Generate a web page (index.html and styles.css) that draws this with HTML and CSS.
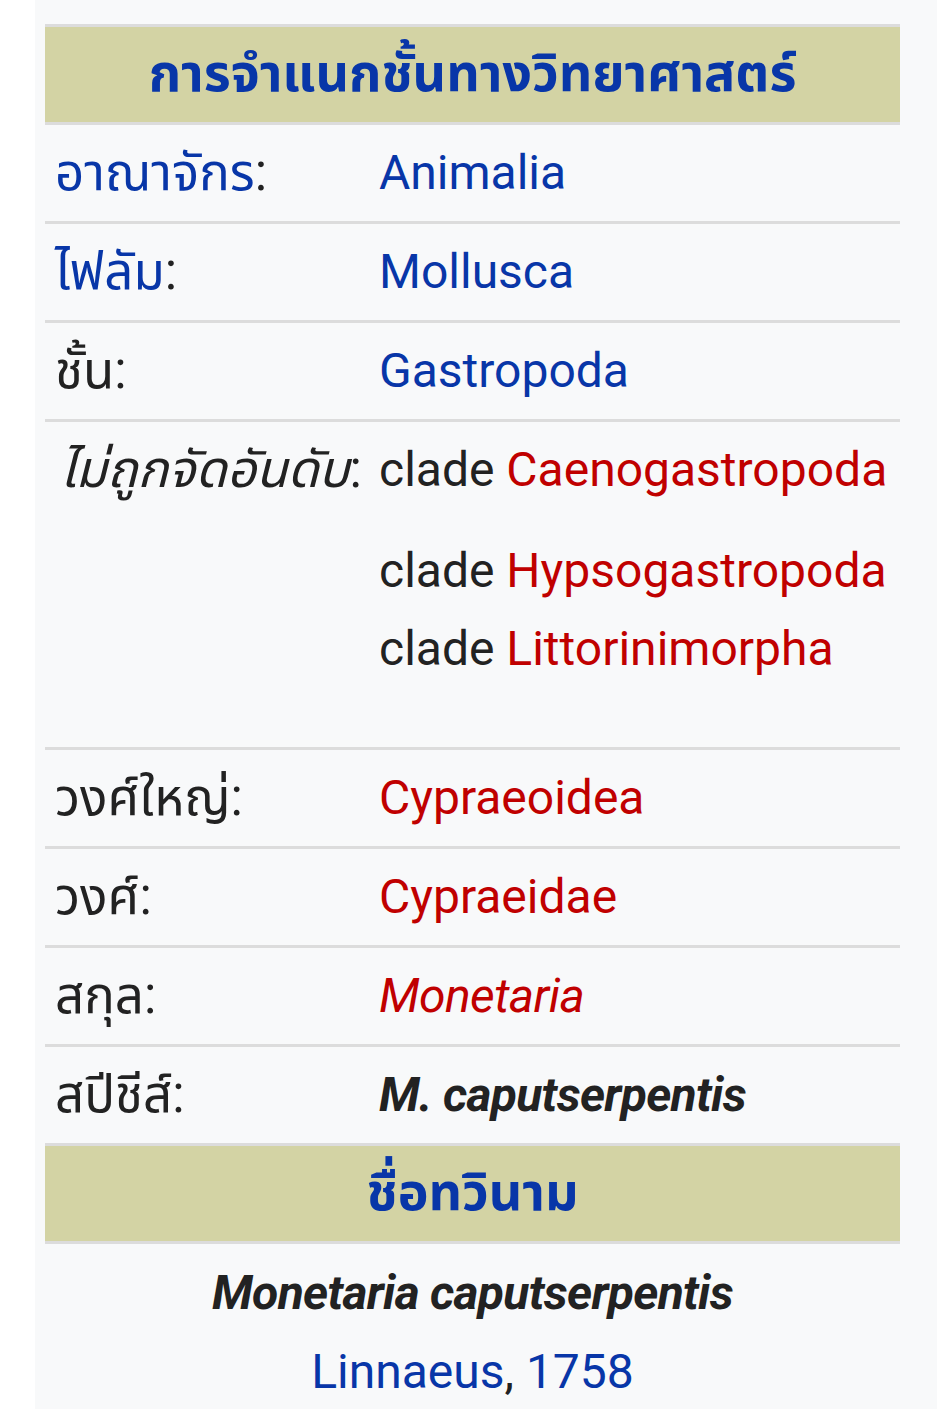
FILE: index.html
```html
<!DOCTYPE html>
<html lang="th">
<head>
<meta charset="utf-8">
<link rel="stylesheet" href="styles.css">
</head>
<body>
<div class="page">
  <div class="gutter"></div>
  <div class="main">
    <div class="taxobox">
      <div class="head"><a class="link">การจำแนกชั้นทางวิทยาศาสตร์</a></div>
      <div class="row">
        <div class="label"><a class="link">อาณาจักร</a>:</div>
        <div class="value"><a class="link">Animalia</a></div>
      </div>
      <div class="row">
        <div class="label"><a class="link">ไฟลัม</a>:</div>
        <div class="value"><a class="link">Mollusca</a></div>
      </div>
      <div class="row">
        <div class="label">ชั้น:</div>
        <div class="value"><a class="link">Gastropoda</a></div>
      </div>
      <div class="row tall">
        <div class="label"><i>ไม่ถูกจัดอันดับ</i>:</div>
        <div class="value">
          <div class="line">clade <a class="red">Caenogastropoda</a></div>
          <div class="line gap">clade <a class="red">Hypsogastropoda</a></div>
          <div class="line">clade <a class="red">Littorinimorpha</a></div>
        </div>
      </div>
      <div class="row">
        <div class="label">วงศ์ใหญ่:</div>
        <div class="value"><a class="red">Cypraeoidea</a></div>
      </div>
      <div class="row">
        <div class="label">วงศ์:</div>
        <div class="value"><a class="red">Cypraeidae</a></div>
      </div>
      <div class="row">
        <div class="label">สกุล:</div>
        <div class="value"><a class="red"><i class="tight">Monetaria</i></a></div>
      </div>
      <div class="row">
        <div class="label">สปีชีส์:</div>
        <div class="value"><b class="sci"><i>M. caputserpentis</i></b></div>
      </div>
      <div class="head"><a class="link">ชื่อทวินาม</a></div>
      <div class="binomial">
        <div class="line"><b class="sci"><i>Monetaria caputserpentis</i></b></div>
        <div class="line"><a class="link">Linnaeus</a>, <a class="link">1758</a></div>
      </div>
    </div>
  </div>
</div>
</body>
</html>
```

FILE: styles.css
```css
html, body {
  margin: 0;
  padding: 0;
  background: #ffffff;
}

body {
  font-family: Roboto, "Noto Sans Thai", "Noto Sans Thai UI", "Noto Sans", sans-serif;
  font-size: 48px;
  color: #222222;
}

.page {
  display: flex;
  min-height: 1409px;
}

.gutter {
  width: 35px;
  flex: none;
  background: #ffffff;
}

.main {
  flex: 1;
  background: #f8f9fa;
  padding: 24px 37px 0 10px;
}

.taxobox {
  width: 855px;
  border-top: 3px solid #dcdcdc;
}

.head {
  background: #d3d3a4;
  height: 95px;
  display: flex;
  align-items: center;
  justify-content: center;
  font-weight: bold;
  font-size: 52px;
  border-bottom: 3px solid #dcdcdc;
}

.link {
  color: #0836a8;
  text-decoration: none;
}

.red {
  color: #c00000;
  text-decoration: none;
}

.row {
  display: flex;
  border-bottom: 3px solid #dcdcdc;
  padding: 10px 0;
  line-height: 76px;
}

.label {
  width: 324px;
  flex: none;
  padding-left: 10px;
  white-space: nowrap;
  font-size: 51px;
}

.label i {
  padding-left: 5px;
}

.value {
  flex: 1;
  white-space: nowrap;
}

.sci {
  letter-spacing: -0.7px;
}

.tight {
  letter-spacing: -0.6px;
}

.tall {
  padding-bottom: 59px;
}

.tall .line {
  line-height: 78px;
}

.tall .line:first-child {
  line-height: 76px;
}

.tall .gap {
  margin-top: 24px;
}

.binomial {
  text-align: center;
  padding: 9px 0 20px;
  line-height: 79px;
}
```
